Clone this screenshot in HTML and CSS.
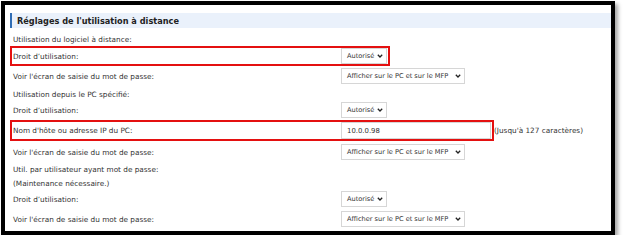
FILE: index.html
```html
<!DOCTYPE html>
<html lang="fr">
<head>
<meta charset="utf-8">
<link rel="stylesheet" href="styles.css">
</head>
<body>
<div class="frame">
  <div class="head"><span class="head-title">Réglages de l'utilisation à distance</span></div>

  <div class="row r-text r-first"><span class="lbl">Utilisation du logiciel à distance:</span></div>

  <div class="row r-box r-box1">
    <span class="lbl">Droit d’utilisation:</span>
    <div class="sel sel-short">Autorisé<svg class="chev" viewBox="0 0 6 4" width="6" height="4"><polyline points="0.8,0.8 3,3 5.2,0.8"/></svg></div>
  </div>

  <div class="row r-ctl">
    <span class="lbl">Voir l'écran de saisie du mot de passe:</span>
    <div class="sel sel-long">Afficher sur le PC et sur le MFP<svg class="chev" viewBox="0 0 6 4" width="6" height="4"><polyline points="0.8,0.8 3,3 5.2,0.8"/></svg></div>
  </div>

  <div class="row r-text r-gap"><span class="lbl">Utilisation depuis le PC spécifié:</span></div>

  <div class="row r-ctl">
    <span class="lbl">Droit d’utilisation:</span>
    <div class="sel sel-short">Autorisé<svg class="chev" viewBox="0 0 6 4" width="6" height="4"><polyline points="0.8,0.8 3,3 5.2,0.8"/></svg></div>
  </div>

  <div class="box-line">
    <div class="row r-box r-box2">
      <span class="lbl">Nom d'hôte ou adresse IP du PC:</span>
      <div class="inp">10.0.0.98</div>
    </div>
    <span class="note">(Jusqu'à 127 caractères)</span>
  </div>

  <div class="row r-ctl r-ctl2">
    <span class="lbl">Voir l'écran de saisie du mot de passe:</span>
    <div class="sel sel-long">Afficher sur le PC et sur le MFP<svg class="chev" viewBox="0 0 6 4" width="6" height="4"><polyline points="0.8,0.8 3,3 5.2,0.8"/></svg></div>
  </div>

  <div class="row r-text"><span class="lbl">Util. par utilisateur ayant mot de passe:</span></div>
  <div class="row r-text"><span class="lbl">(Maintenance nécessaire.)</span></div>

  <div class="row r-ctl">
    <span class="lbl">Droit d’utilisation:</span>
    <div class="sel sel-short">Autorisé<svg class="chev" viewBox="0 0 6 4" width="6" height="4"><polyline points="0.8,0.8 3,3 5.2,0.8"/></svg></div>
  </div>

  <div class="row r-ctl r-last">
    <span class="lbl">Voir l'écran de saisie du mot de passe:</span>
    <div class="sel sel-long">Afficher sur le PC et sur le MFP<svg class="chev" viewBox="0 0 6 4" width="6" height="4"><polyline points="0.8,0.8 3,3 5.2,0.8"/></svg></div>
  </div>
</div>
</body>
</html>
```

FILE: styles.css
```css
html, body {
  margin: 0;
  padding: 0;
  background: #ffffff;
}

body {
  font-family: "DejaVu Sans", Verdana, sans-serif;
  font-size: 7.3px;
  color: #333333;
}

.frame {
  box-sizing: border-box;
  margin: 1px 0 0 1px;
  width: 614px;
  height: 234px;
  border: 4px solid #000000;
  background: #ffffff;
  box-shadow: 3px 3px 4px rgba(0, 0, 0, 0.35);
  overflow: hidden;
}

.head {
  margin: 8px 0 0 5px;
  height: 15px;
  background: #eaf1fb;
  border-left: 2px solid #2f6db5;
  display: flex;
  align-items: center;
  padding-left: 5px;
}

.head-title {
  font-weight: bold;
  font-size: 8.2px;
  color: #222222;
}

.row {
  display: flex;
  align-items: center;
  padding-left: 8px;
}

.lbl {
  width: 328px;
  flex: none;
  white-space: nowrap;
}

.r-text {
  height: 14px;
}

.r-first {
  margin-top: 4px;
}

.r-gap {
  margin-top: 2px;
}

.r-ctl {
  height: 18px;
}

.r-ctl2 {
  margin-top: 1px;
  height: 20px;
}

.r-last {
  margin-top: 2px;
}

.r-box {
  box-sizing: border-box;
  margin-left: 5px;
  border: 2px solid #e41010;
  padding-left: 1px;
  width: fit-content;
}

.r-box1 {
  height: 20px;
  padding-right: 1px;
}

.r-box1 + .r-ctl {
  margin-top: 1px;
}

.box-line {
  display: flex;
  align-items: center;
  margin-top: 1px;
}

.r-box2 {
  height: 21px;
  padding-right: 1px;
}

.note {
  white-space: nowrap;
}

.sel {
  box-sizing: border-box;
  height: 16px;
  border: 1px solid #d6d6d6;
  background: #ffffff;
  display: flex;
  align-items: center;
  justify-content: space-between;
  padding: 0 3px 0 5px;
  color: #333333;
  font-size: 6.6px;
  white-space: nowrap;
}

.sel-short {
  width: 46px;
}

.sel-long {
  width: 124px;
}

.chev {
  flex: none;
  fill: none;
  stroke: #222222;
  stroke-width: 1.3;
}

.inp {
  box-sizing: border-box;
  width: 150px;
  height: 17px;
  border: 1px solid #d6d6d6;
  display: flex;
  align-items: center;
  padding-left: 5px;
  font-size: 6.9px;
}
```
